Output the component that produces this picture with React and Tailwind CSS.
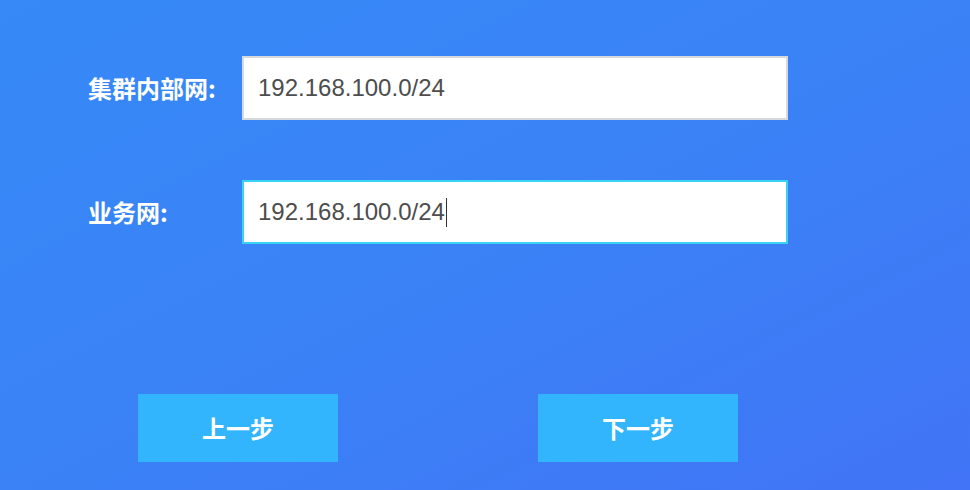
import React from "react";

const fields = [
  { label: "集群内部网:", value: "192.168.100.0/24", active: false },
  { label: "业务网:", value: "192.168.100.0/24", active: true },
];

export default function App() {
  return (
    <div className="w-[970px] h-[490px] overflow-hidden bg-gradient-to-br from-[#3689f7] via-[#3a82f6] to-[#4174f6] pt-[56px] font-['Noto_Sans_CJK_SC',sans-serif]">
      {/* Form rows */}
      <div className="flex flex-col gap-[60px] pl-[88px]">
        {fields.map((f) => (
          <div key={f.label} className="flex items-center">
            <div className="w-[154px] text-[24px] font-bold text-white leading-none">
              {f.label}
            </div>
            <div
              className={
                f.active
                  ? "flex items-center w-[546px] h-[64px] bg-white border-2 border-[#3ad3f4] pl-[14px]"
                  : "flex items-center w-[546px] h-[64px] bg-white border-2 border-[#d5d8dd] pl-[14px]"
              }
            >
              <span className="font-['Liberation_Sans',sans-serif] text-[24px] text-[#4d4d4d] leading-none">
                {f.value}
              </span>
              {f.active && <span className="ml-[1px] w-[1px] h-[29px] bg-[#333]" />}
            </div>
          </div>
        ))}
      </div>

      {/* Buttons */}
      <div className="flex gap-[200px] pl-[138px] mt-[150px]">
        <button className="w-[200px] h-[68px] bg-[#33b5fd] text-white text-[24px] font-bold leading-none">
          上一步
        </button>
        <button className="w-[200px] h-[68px] bg-[#33b5fd] text-white text-[24px] font-bold leading-none">
          下一步
        </button>
      </div>
    </div>
  );
}
